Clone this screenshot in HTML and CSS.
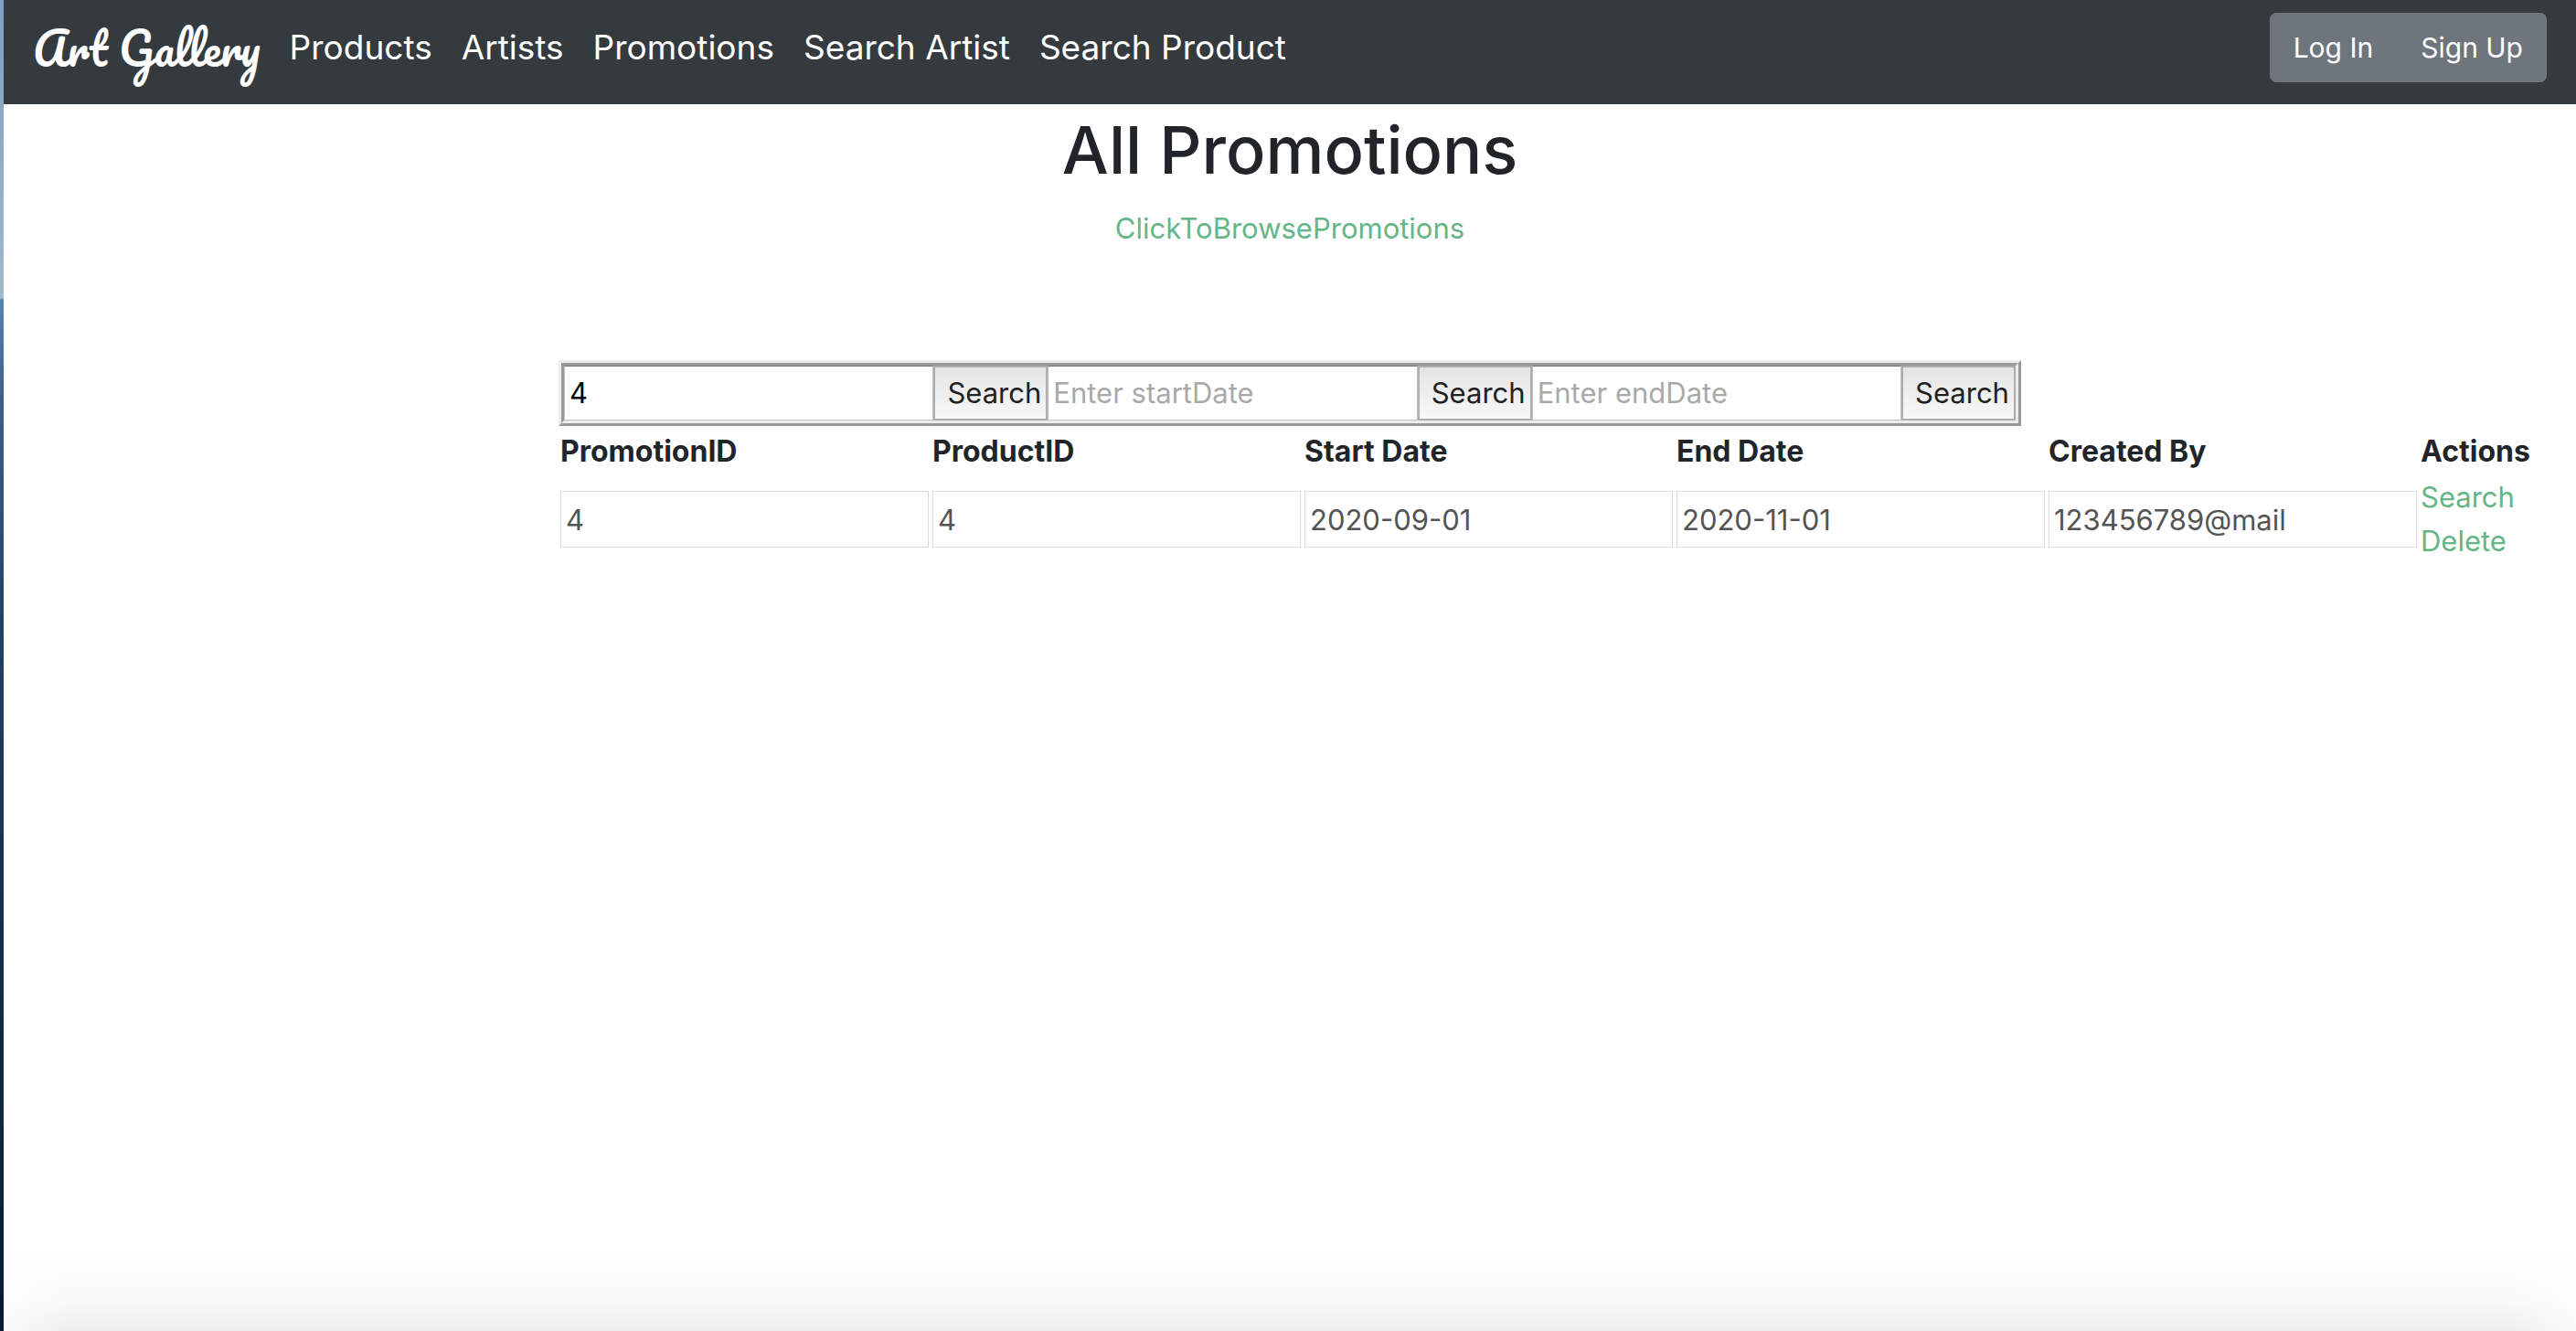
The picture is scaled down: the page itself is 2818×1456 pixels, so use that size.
FILE: index.html
```html
<!DOCTYPE html>
<html lang="en">
<head>
<meta charset="utf-8">
<meta name="viewport" content="width=device-width, initial-scale=1">
<title>Art Gallery</title>
<link rel="stylesheet" href="styles.css">
</head>
<body>
<header class="navbar">
  <a class="brand" href="#">Art Gallery</a>
  <nav class="nav">
    <a class="nav-link" href="#">Products</a>
    <a class="nav-link" href="#">Artists</a>
    <a class="nav-link" href="#">Promotions</a>
    <a class="nav-link" href="#">Search Artist</a>
    <a class="nav-link" href="#">Search Product</a>
  </nav>
  <div class="btn-group">
    <button class="btn" type="button">Log In</button>
    <button class="btn" type="button">Sign Up</button>
  </div>
</header>
<main class="page">
  <h1 class="title">All Promotions</h1>
  <a class="link" href="#">ClickToBrowsePromotions</a>
  <div class="container">
    <form class="search">
      <input class="search-input" type="text" aria-label="Promotion ID" value="4">
      <button class="search-btn" type="button">Search</button>
      <input class="search-input" type="text" aria-label="Start date" placeholder="Enter startDate">
      <button class="search-btn" type="button">Search</button>
      <input class="search-input" type="text" aria-label="End date" placeholder="Enter endDate">
      <button class="search-btn" type="button">Search</button>
    </form>
    <table class="table">
      <thead>
        <tr><th>PromotionID</th><th>ProductID</th><th>Start Date</th><th>End Date</th><th>Created By</th><th>Actions</th></tr>
      </thead>
      <tbody>
        <tr>
          <td><input class="cell" type="text" aria-label="PromotionID" value="4" disabled></td>
          <td><input class="cell" type="text" aria-label="ProductID" value="4" disabled></td>
          <td><input class="cell" type="text" aria-label="Start Date" value="2020-09-01" disabled></td>
          <td><input class="cell" type="text" aria-label="End Date" value="2020-11-01" disabled></td>
          <td><input class="cell" type="text" aria-label="Created By" value="123456789@mail" disabled></td>
          <td><a class="link" href="#">Search</a><br><a class="link" href="#">Delete</a></td>
        </tr>
      </tbody>
    </table>
  </div>
</main>
</body>
</html>
```

FILE: styles.css
```css
* { box-sizing: border-box; }

html { background: linear-gradient(#7c9fc8 0, #a3b8c8 326px, #5585ad 328px, #3c5f88 440px, #1f4067 700px, #14304f 1000px, #0a1a30 100%); }

body {
  margin: 0 0 0 4px;
  min-height: 100vh;
  background:
    linear-gradient(to right, rgba(255, 255, 255, 0.7), transparent 80px, transparent calc(100% - 80px), rgba(255, 255, 255, 0.7)),
    linear-gradient(to top, #eeeeee 0, #f8f8f8 32px, #ffffff 88px);
  color: #212529;
  font: 31px/48px Inter, "Liberation Sans", sans-serif;
}

.navbar {
  display: flex;
  align-items: center;
  min-height: 114px;
  padding: 0 32px;
  background: #353a3e;
}

.brand {
  margin-right: 16px;
  padding-bottom: 8px;
  color: #fff;
  font: 48px/64px Pacifico, "Liberation Serif", cursive;
  text-decoration: none;
  white-space: nowrap;
}

.nav { display: flex; flex: 1; }

.nav-link {
  padding: 0 16px 10px;
  color: #fff;
  font-size: 37px;
  line-height: 60px;
  text-decoration: none;
  white-space: nowrap;
}

.btn-group { display: flex; margin-bottom: 10px; border-radius: 8px; overflow: hidden; }

.btn {
  padding: 12px 24px;
  border: 2px solid #6e757c;
  background: #6e757c;
  color: #fff;
  font: inherit;
  font-size: 30px;
}

.page { padding-top: 2px; text-align: center; }

.title { margin: 0 0 14px; font-size: 72px; line-height: 96px; font-weight: 500; }

.link { color: #65b687; text-decoration: none; }

.container { width: 1600px; margin: 120px auto 0; text-align: left; }

.search {
  display: flex;
  height: 72px;
  border: 6px ridge #ececec;
}

.search-input {
  flex: 1;
  min-width: 0;
  padding: 2px 5px;
  border: 1px solid #c0c0c0;
  border-top-color: #777;
  background: #fff;
  color: #000;
  font: inherit;
}

.search-input::placeholder { color: #a9a9a9; opacity: 1; }

.search-btn {
  width: 125px;
  padding: 0 0 0 8px;
  border: 2px solid #adadad;
  background: linear-gradient(#e4e4e4, #f8f8f8);
  color: #212121;
  font: inherit;
}

.table { width: max-content; border-collapse: collapse; }

.table th { padding: 4px 2px 0; font-size: 32px; text-align: left; }

.table td { padding: 2px; }

.cell {
  width: 403px;
  height: 62px;
  padding: 2px 5px;
  border: 1px solid #dcdcdc;
  background: #fff;
  color: #545454;
  font: inherit;
}
```
